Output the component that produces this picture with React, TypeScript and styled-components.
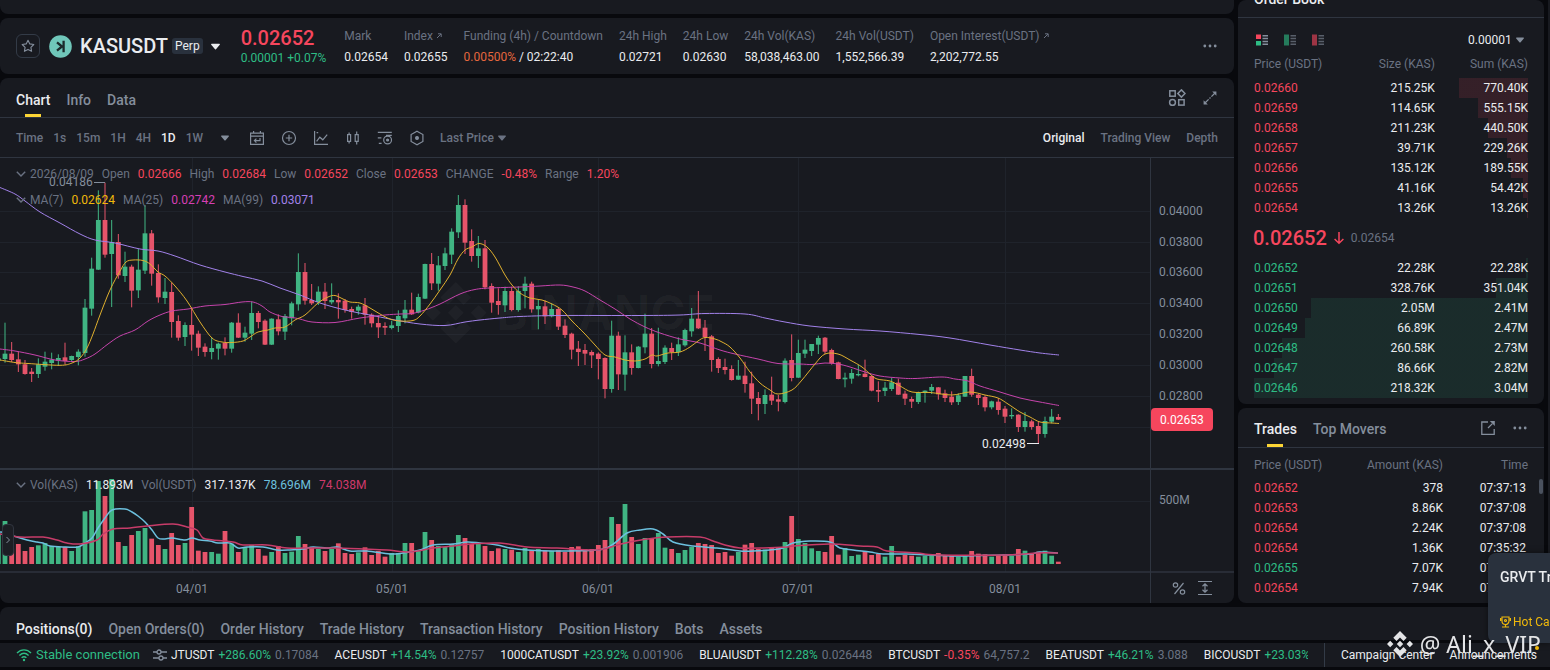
import React from "react";
import styled, { createGlobalStyle, css } from "styled-components";

const color = {
  page: "#08090d",
  panel: "#181a20",
  line: "#2f3540",
  grid: "#1f232b",
  text: "#eaecef",
  second: "#848e9c",
  third: "#6a7282",
  buy: "#2ebd85",
  sell: "#f6465d",
  candleUp: "#40b583",
  candleDown: "#e6546a",
  brand: "#fcd535",
};

const GlobalStyle = createGlobalStyle`
  * { box-sizing: border-box; }
  body {
    margin: 0;
    background: ${color.page};
    color: ${color.text};
    font-family: Roboto, "Liberation Sans", sans-serif;
    font-size: 12px;
    line-height: 16px;
  }
  button, select {
    font: inherit;
    color: inherit;
    background: none;
    border: 0;
    margin: 0;
    padding: 0;
    cursor: pointer;
  }
  a { color: inherit; text-decoration: none; }
  svg { display: block; flex: none; }
`;

/* ---------- layout ---------- */

const Page = styled.div`
  display: flex;
  flex-direction: column;
  gap: 4px;
`;

const Workspace = styled.div`
  display: grid;
  grid-template-columns: minmax(0, 1fr) 306px 2px;
  gap: 4px;
`;

const Column = styled.div`
  display: flex;
  flex-direction: column;
  gap: 4px;
  min-width: 0;
`;

const Panel = styled.section`
  background: ${color.panel};
  border-radius: 8px;
  overflow: hidden;
`;

const TopStrip = styled(Panel)`
  height: 14px;
  border-radius: 0 0 8px 8px;
`;

const EdgePanel = styled(Panel)`
  border-radius: 0;
`;

/* ---------- symbol header ---------- */

const SymbolBar = styled(Panel)`
  display: flex;
  align-items: center;
  height: 56px;
  padding: 0 16px;
`;

const StarButton = styled.button`
  display: grid;
  place-items: center;
  width: 24px;
  height: 24px;
  border: 1px solid #333b47;
  border-radius: 6px;
  margin-right: 9px;
  color: ${color.second};
`;

const SymbolName = styled.h1`
  margin: 0 4px 0 8px;
  font-size: 20px;
  line-height: 28px;
  font-weight: 500;
`;

const PerpBadge = styled.span`
  padding: 0 3px;
  border-radius: 3px;
  background: #29313d;
  font-size: 12px;
  margin-right: 8px;
`;

const PriceBlock = styled.div`
  margin: 0 18px 0 21px;
`;

const LastPrice = styled.div`
  color: ${color.sell};
  font-size: 20px;
  line-height: 24px;
  font-weight: 500;
`;

const Change = styled.div`
  color: ${color.buy};
  white-space: nowrap;
`;

const Stats = styled.dl`
  display: flex;
  gap: 16px;
  flex: 1;
  margin: 0;
  white-space: nowrap;
`;

const Stat = styled.div`
  dt {
    display: flex;
    gap: 3px;
    color: ${color.third};
    margin-bottom: 5px;
  }
  dd { margin: 0; }
`;

const Funding = styled.span`
  color: #e5673e;
`;

const IconButton = styled.button<{ $bright?: boolean }>`
  display: grid;
  place-items: center;
  color: ${(p) => (p.$bright ? color.text : color.second)};
`;

/* ---------- tabs ---------- */

const TabRow = styled.div<{ $divider?: boolean }>`
  display: flex;
  align-items: center;
  height: 40px;
  padding: 0 16px;
  ${(p) => p.$divider && css`border-bottom: 1px solid ${color.line};`}
`;

const Tabs = styled.nav<{ $top?: number }>`
  display: flex;
  gap: 16px;
  flex: 1;
  align-self: stretch;
  padding-top: ${(p) => p.$top ?? 4}px;
`;

const Tab = styled.button<{ $active?: boolean; $mark?: boolean }>`
  position: relative;
  font-size: 14px;
  font-weight: 500;
  white-space: nowrap;
  color: ${(p) => (p.$active ? color.text : color.second)};
  ${(p) =>
    p.$mark &&
    css`
      &::after {
        content: "";
        position: absolute;
        left: calc(50% - 8px);
        bottom: 0;
        width: 16px;
        height: 3px;
        background: ${color.brand};
      }
    `}
`;

const Actions = styled.div`
  display: flex;
  gap: 16px;
  align-items: center;
`;

/* ---------- chart toolbar ---------- */

const Toolbar = styled.div`
  display: flex;
  align-items: center;
  height: 40px;
  padding: 0 16px;
  color: ${color.third};
  border-bottom: 1px solid ${color.line};
`;

const Intervals = styled.div`
  display: flex;
  gap: 10px;
  margin-right: 18px;
`;

const TextButton = styled.button<{ $active?: boolean }>`
  font-weight: 500;
  white-space: nowrap;
  color: ${(p) => (p.$active ? color.text : color.third)};
`;

const ToolIcons = styled.div`
  display: flex;
  gap: 16px;
  margin: 0 15px 0 20px;
`;

const SelectWrap = styled.label<{ $bright?: boolean }>`
  display: flex;
  align-items: center;
  gap: 4px;
  color: ${(p) => (p.$bright ? color.text : color.third)};
  select {
    appearance: none;
    font-weight: ${(p) => (p.$bright ? 400 : 500)};
    outline: none;
  }
`;

const Views = styled.div`
  display: flex;
  gap: 16px;
  margin-left: auto;
`;

/* ---------- chart ---------- */

const ChartArea = styled.div`
  position: relative;
  height: 445px;
`;

const ChartSvg = styled.svg`
  width: 100%;
  height: 445px;
  font-size: 12px;
  fill: none;
`;

const Legend = styled.div<{ $top: number }>`
  position: absolute;
  left: 16px;
  top: ${(p) => p.$top}px;
  display: flex;
  align-items: center;
  gap: 8px;
  color: ${color.third};
  white-space: nowrap;
`;

const LegendLead = styled.span`
  display: flex;
  align-items: center;
  gap: 4px;
`;

const Tint = styled.span<{ $c: string }>`
  color: ${(p) => p.$c};
`;

const DrawerHandle = styled.button`
  position: absolute;
  left: 2px;
  top: 366px;
  width: 12px;
  height: 32px;
  display: grid;
  place-items: center;
  background: #1c1e24;
  border: 1px solid #30353f;
  border-radius: 4px;
  color: ${color.second};
`;

/* ---------- order book / trades ---------- */

const BookTitle = styled.header`
  display: flex;
  flex-direction: column;
  justify-content: flex-end;
  height: 18px;
  padding: 0 16px 8px;
  border-bottom: 1px solid ${color.line};
  overflow: hidden;
  font-size: 14px;
  line-height: 20px;
  font-weight: 500;
  h2 { margin: 0; font: inherit; }
`;

const BookTools = styled.div`
  display: flex;
  align-items: center;
  gap: 16px;
  height: 28px;
  margin: 8px 20px 0 18px;
  label { margin-left: auto; }
`;

const BookBody = styled(Panel)`
  padding-bottom: 6px;
`;

const TradesPanel = styled(Panel)`
  position: relative;
  height: 195px;
`;

const DataTable = styled.table<{ $second: number; $tall?: boolean }>`
  width: calc(100% - 32px);
  margin: 0 16px;
  border-collapse: collapse;
  table-layout: fixed;
  th, td {
    padding: 0;
    height: 20px;
    text-align: right;
    font-weight: 400;
  }
  th {
    height: ${(p) => (p.$tall ? 30 : 24)}px;
    padding: ${(p) => (p.$tall ? "4px 0 0" : "0 0 4px")};
    color: ${color.third};
  }
  th:first-child, td:first-child { text-align: left; }
  td:last-child { padding-right: ${(p) => (p.$tall ? 2 : 0)}px; }
  th:nth-child(1) { width: 38%; }
  th:nth-child(2) { width: ${(p) => p.$second}%; }
`;

const PriceCell = styled.td<{ $side: "buy" | "sell" }>`
  color: ${(p) => color[p.$side]};
`;

const MidPrice = styled.div`
  display: flex;
  align-items: center;
  gap: 6px;
  height: 40px;
  padding: 0 16px 0 15px;
  color: ${color.sell};
  strong {
    font-size: 20px;
    font-weight: 500;
  }
  span { color: ${color.third}; }
`;

const HiddenHead = styled.thead`
  visibility: collapse;
`;

const ScrollThumb = styled.i`
  position: absolute;
  right: 1px;
  top: 71px;
  width: 4px;
  height: 15px;
  border-radius: 2px;
  background: #4a515e;
`;

/* ---------- bottom ---------- */

const PositionsPanel = styled(Panel)`
  border-radius: 8px 8px 0 0;
  height: 33px;
`;

const Footer = styled.footer`
  display: flex;
  align-items: center;
  height: 24px;
  margin-top: -1px;
  padding-left: 16px;
  background: ${color.panel};
`;

const Connection = styled.span`
  display: flex;
  align-items: center;
  gap: 4px;
  margin-right: 13px;
  color: ${color.buy};
  font-size: 13px;
  white-space: nowrap;
`;

const Tape = styled.div`
  display: flex;
  flex: 1;
  gap: 16px;
  min-width: 0;
  overflow: hidden;
  margin: 0 16px 0 4px;
  white-space: nowrap;
`;

const Quote = styled.a`
  display: flex;
  gap: 4px;
  flex: none;
  span:last-child { color: ${color.third}; }
`;

const FooterLinks = styled.div`
  display: flex;
  align-items: center;
  gap: 16px;
  align-self: stretch;
  padding: 0 13px 0 16px;
  border-left: 1px solid #333b47;
  white-space: nowrap;
`;

const Toast = styled.aside`
  position: fixed;
  right: 0;
  top: 553px;
  width: 62px;
  height: 90px;
  padding: 15px 0 0 12px;
  overflow: hidden;
  white-space: nowrap;
  border-radius: 8px 0 0 8px;
  background: #29313d;
  box-shadow: 0 0 6px rgba(0, 0, 0, 0.5);
  h3 {
    margin: 0 0 28px;
    font-size: 14px;
    line-height: 18px;
    font-weight: 500;
  }
  p {
    display: flex;
    align-items: center;
    gap: 2px;
    margin: 0;
    color: #f0b90b;
  }
`;

const Signature = styled.div`
  position: fixed;
  right: 9px;
  top: 629px;
  display: flex;
  align-items: center;
  gap: 6px;
  color: #e3e4e6;
  font-family: "Noto Sans", sans-serif;
  font-size: 23px;
  line-height: 30px;
  white-space: nowrap;
`;

const Dot = styled.i`
  position: fixed;
  right: 11px;
  top: 646px;
  width: 4px;
  height: 4px;
  border-radius: 50%;
  background: #f0b90b;
`;

/* ---------- icons ---------- */

const Caret = ({ size = 8 }: { size?: number }) => (
  <svg width={size} height={size} viewBox="0 0 8 8" fill="currentColor">
    <path d="M.6 1.6h6.8c.5 0 .7.5.4.9L4.4 6.4a.6.6 0 0 1-.8 0L.2 2.5c-.3-.4-.1-.9.4-.9z" />
  </svg>
);

const Dots = () => (
  <svg width="16" height="16" viewBox="0 0 16 16" fill="currentColor">
    <circle cx="2.8" cy="8" r="1.4" />
    <circle cx="8" cy="8" r="1.4" />
    <circle cx="13.2" cy="8" r="1.4" />
  </svg>
);

const Star = () => (
  <svg width="14" height="14" viewBox="0 0 14 14" fill="none" stroke="currentColor" strokeWidth="1.1" strokeLinejoin="round">
    <path d="M7 1.2l1.8 3.7 4 .6-2.9 2.8.7 4L7 10.4l-3.6 1.9.7-4L1.2 5.5l4-.6z" />
  </svg>
);

const Coin = () => (
  <svg width="23" height="23" viewBox="0 0 23 23">
    <circle cx="11.5" cy="11.5" r="11.3" fill="#70c7ba" />
    <path d="M14.6 5.8v11.4M8 7.4l5 4.1-5 4.1" fill="none" stroke="#1c2b2c" strokeWidth="2.3" />
  </svg>
);

const OutArrow = () => (
  <svg width="6" height="16" viewBox="0 0 6 16" fill="none" stroke="currentColor">
    <path d="M1 10l4-4M2 5.8h3.2V9" />
  </svg>
);

const Chevron = () => (
  <svg width="10" height="10" viewBox="0 0 10 10" fill="none" stroke="currentColor" strokeWidth="1.4">
    <path d="M.8 2.8L5 7l4.2-4.2" />
  </svg>
);

const Layout = () => (
  <svg width="18" height="18" viewBox="0 0 18 18" fill="none" stroke="currentColor" strokeWidth="1.5">
    <rect x="1.8" y="1.8" width="5.4" height="5.4" />
    <path d="M13.4.9l3.6 3.6-3.6 3.6-3.6-3.6z" />
    <circle cx="4.5" cy="13.4" r="2.9" />
    <rect x="10.7" y="10.7" width="5.4" height="5.4" />
  </svg>
);

const Expand = () => (
  <svg width="16" height="16" viewBox="0 0 16 16" fill="currentColor">
    <path d="M10.2 1.600h4.200v4.200zM1.600 10.200v4.200h4.200z" />
    <path d="M12.800 3.200L9.400 6.600M8.500 7.500l-1 1M6.600 9.400l-3.400 3.400" stroke="currentColor" strokeWidth="1.3" />
  </svg>
);

const toolPaths: { name: string; art: React.ReactNode }[] = [
  {
    name: "Go to date",
    art: (
      <>
        <path d="M1.600 3.200h12.800v11.200H1.600zM1.600 6.200h12.800M4.600 1v2.200M11.400 1v2.200" />
        <path d="M11 8v2.600H5.600M7.400 8.600l-2 2 2 2" />
      </>
    ),
  },
  {
    name: "Compare",
    art: (
      <>
        <circle cx="8" cy="8" r="6.5" />
        <path d="M8 4.8v6.4M4.8 8h6.4" />
      </>
    ),
  },
  { name: "Indicators", art: <path d="M1.6 1v13.4H15M3.6 11.4l3.2-4.2 3 2.6 4.4-5.2M3.6 2.6h1.6" /> },
  {
    name: "Candle style",
    art: <path d="M2.600 4.600h3v6.800h-3zM4.100 2.400v2.200M4.100 11.400v2.200M10.200 4.600h3v6.800h-3zM11.700 1.600v3M11.700 11.400v3" />,
  },
  {
    name: "Display settings",
    art: (
      <>
        <path d="M.8 2.4h14M.8 7.8h3.6M1.8 13.4h2.8M14.8 5.4H9" />
        <circle cx="10.6" cy="10" r="3.9" />
        <circle cx="10.6" cy="10" r="1" fill="currentColor" />
      </>
    ),
  },
  {
    name: "Preferences",
    art: (
      <>
        <path d="M8 1.2l5.9 3.4v6.8L8 14.8l-5.9-3.4V4.6z" />
        <circle cx="8" cy="8" r="1.4" fill="currentColor" />
      </>
    ),
  },
];

const BookGlyph = ({ kind }: { kind: "both" | "bids" | "asks" }) => (
  <svg width="12" height="12" viewBox="0 0 12 12" opacity={kind === "both" ? 1 : 0.6}>
    <path d="M0 .5h5v4.500H0z" fill={kind === "bids" ? color.buy : color.sell} />
    <path d="M0 7h5v4.500H0z" fill={kind === "asks" ? color.sell : color.buy} />
    {kind !== "both" && <path d="M0 5h5v2H0z" fill={kind === "bids" ? color.buy : color.sell} />}
    <path d="M6.500 1H12v1.500H6.500zM6.500 3.800H12v1.500H6.500zM6.500 6.700H12v1.500H6.500zM6.500 9.500H12V11H6.500z" fill={color.second} />
  </svg>
);

const ArrowDown = () => (
  <svg width="12" height="14" viewBox="0 0 12 14" fill="none" stroke="currentColor" strokeWidth="1.5">
    <path d="M6 1v11M1.6 8L6 12.2 10.4 8" />
  </svg>
);

const PopOut = () => (
  <svg width="16" height="16" viewBox="0 0 16 16" fill="none" stroke="currentColor" strokeWidth="1.3">
    <path d="M8 2H1.8v12.4h12.4V9M8 8l4.4-4.4" />
    <path d="M9.8 1h5v5z" fill="currentColor" stroke="none" />
  </svg>
);

const Wifi = () => (
  <svg width="16" height="14" viewBox="0 0 16 14" fill="none" stroke="currentColor" strokeWidth="1.4">
    <path d="M1 5C5 .8 11 .8 15 5M3.4 7.4c2.8-2.6 6.4-2.6 9.2 0M5.6 9.8c1.4-1.3 3.4-1.3 4.8 0" />
    <circle cx="8" cy="12" r="1.2" fill="currentColor" stroke="none" />
  </svg>
);

const Sliders = () => (
  <svg width="14" height="14" viewBox="0 0 14 14" fill="none" stroke="currentColor" strokeWidth="1.3">
    <path d="M0 4h4M8 4h6M0 10h6M10 10h4" />
    <circle cx="6" cy="4" r="2" />
    <circle cx="8" cy="10" r="2" />
  </svg>
);

const Medal = () => (
  <svg width="11" height="12" viewBox="0 0 11 12" fill="none" stroke="currentColor" strokeWidth="1.2">
    <path d="M2 1h7v4a3.500 3.500 0 0 1-7 0zM.6 2v3M10.400 2v3M5.500 8.500v2M2 11h7" />
    <circle cx="5.500" cy="4.500" r="1" />
  </svg>
);

const Diamonds = ({ size }: { size: number }) => (
  <svg width={size} height={size} viewBox="0 0 28 28" fill="currentColor">
    <path d="M14 1l6.700 6.700-3.200 3.200L14 7.400l-3.500 3.500-3.200-3.200z" />
    <path d="M14 27l6.700-6.700-3.200-3.200-3.500 3.500-3.500-3.500-3.200 3.200z" />
    <path d="M4.200 10.800L7.400 14l-3.200 3.200L1 14zM23.800 10.800L27 14l-3.200 3.200-3.200-3.200zM14 10.800l3.200 3.200-3.200 3.200-3.200-3.200z" />
  </svg>
);

/* ---------- chart data ---------- */

/* Candles run left to right, one per day: side, high, body top, body bottom, low.
   Values are in thirds of a pixel below the `top` line of each span. */
const spans: { top: number; rows: string }[] = [
  {
    top: 170,
    rows: `G 560 565 572 575;G 458 551 567 578;R 516 551 570 576;R 545 568 583 606;R 570 583 612 614;R 594 605 612 636;G 565 583 612 624;
G 545 575 590 602;G 548 569 579 598;G 553 564 572 588;R 518 562 573 584;G 557 558 570 575;G 538 545 561 586;G 387 413 549 560;
G 263 296 416 437;G 61 150 299 300;R 38 150 254 263;G 150 216 252 411;R 192 216 316 326;G 245 290 318 336;R 284 290 362 412;
G 237 299 361 384;G 105 190 302 312;R 180 190 311 347;R 283 309 382 398;G 324 365 384 402;R 338 366 456 503;R 436 453 503 512;
G 457 465 501 528;R 412 465 494 542;R 482 491 533 558;R 520 530 546 560;G 503 534 546 568;G 518 521 536 569;R 502 519 536 556;
G 456 458 536 548;R 430 458 503 504;G 470 488 503 515;G 395 429 491 510`,
  },
  {
    top: 180,
    rows: `R 393 399 426 445;R 418 422 494 495;G 415 416 494 495;R 403 418 454 466;G 402 408 455 480;G 365 370 415 436;G 220 276 373 392;
R 249 276 362 374;R 312 360 370 375;G 319 335 366 375;R 309 335 363 387;G 310 360 367 373;R 340 360 367 416;R 357 362 390 398;
R 380 387 396 416;G 374 380 392 404;R 354 376 404 434;R 400 404 430 442;R 407 429 442 474;R 427 438 443 465;G 422 436 444 448;
G 391 408 438 456;G 360 389 415 430;R 338 389 403 405;G 341 351 398 400;G 251 252 356 357;R 219 252 310 330;G 228 256 311 332;
G 203 220 258 270;G 145 155 224 252;G 45 75 157 174;R 58 75 188 222;R 148 183 228 245;G 168 205 228 264;R 180 205 322 328;
R 310 318 368 398;R 325 363 375 404;G 320 333 376 396;R 320 333 390 394;G 319 333 390 395;G 290 311 333 385;R 305 311 388 398;
G 360 378 388 448;R 361 379 409 432;G 370 387 409 412;R 382 387 440 450;R 418 437 465 474;R 458 461 509 538;R 483 506 516 558;
R 492 510 521 555;R 511 516 526 564;R 517 521 537 598;R 532 534 627 655;G 422 467 627 638;R 455 467 583 630;G 466 517 584 632;
R 493 517 564 584;G 498 500 564 565;G 401 461 502 520;R 444 461 552 565;G 443 543 552 559;G 496 503 546 552;R 488 504 516 540;
G 472 493 516 528;G 446 450 496 500;G 384 416 454 470;R 333 416 445 447;R 420 443 471 513;R 465 469 540 575;R 532 537 564 579;
R 536 561 570 583;R 556 567 600 602`,
  },
  {
    top: 270,
    rows: `G 270 317 329 330;R 275 317 342 368;R 305 340 386 432;R 366 384 402 451;G 358 375 402 432;R 320 374 392 405;R 375 388 395 424;
G 265 272 396 400;R 193 270 324 334;G 209 249 323 324;G 209 239 251 264;G 222 222 243 258;G 197 204 224 252;R 201 203 245 252;
R 236 240 280 284;R 275 277 327 328;G 308 323 328 352;G 297 309 326 341;G 285 312 316 319;R 269 311 321 322;R 316 318 362 364;
R 334 360 365 396;G 336 353 363 378;G 324 337 357 363;R 326 338 374 375;R 362 371 386 405;R 380 387 395 414;G 365 367 396 402;
G 361 362 369 398;G 342 351 362 372;R 351 352 373 389;R 359 370 384 396;R 364 380 397 405;G 370 376 396 405;G 318 318 380 381;
R 296 318 374 380;R 371 374 384 405;R 376 381 412 424;G 392 394 412 418;R 384 395 420 434;R 408 416 440 459;G 415 435 439 447;
R 433 434 471 486;G 426 453 471 485;R 449 454 471 479;R 456 468 492 522;G 440 453 492 503;G 417 440 455 460;R 432 441 449 450`,
  },
];

const candles = spans.flatMap(({ top, rows }) =>
  rows.split(";").map((row) => {
    const [side, ...v] = row.trim().split(" ");
    const [high, open, close, low] = v.map((n) => top + Number(n) / 3);
    return { up: side === "G", high, open, close, low };
  }),
);

/* Volume bar tops, thirds of a pixel below y = 465. */
const volumes = `205 168 250 237 258 246 241 234 243 246 246 258 244 139 135 48 93 42 231 243 210 198 189 221 240 252 204 240 234 126
257 261 261 266 198 236 261 246 240 252 272 261 243 264 260 213 237 249 252 258 252 235 264 267 262 247 270 258 275 264 264 234 234
255 201 225 243 246 237 210 219 237 237 243 258 250 252 254 261 249 256 252 256 258 256 261 246 244 252 252 240 225 156 177 117 216
237 219 219 204 248 252 264 255 246 234 237 240 264 261 272 261 239 234 252 254 246 249 231 153 222 234 250 258 261 213 269 249 273
269 258 270 266 275 243 275 270 272 275 272 272 264 270 270 275 272 258 266 268 275 270 269 273 252 257 266 260 257 272 290`
  .split(/\s+/)
  .map(Number);

const centre = (i: number) => 5 + ((i - 1) * 20) / 3;

const smooth = (src: string) => {
  const p = src.trim().split(/\s+/).map((s) => s.split(",").map(Number));
  let d = `M${p[0]}`;
  for (let i = 0; i < p.length - 1; i++) {
    const a = p[Math.max(i - 1, 0)];
    const b = p[i];
    const c = p[i + 1];
    const e = p[Math.min(i + 2, p.length - 1)];
    d += `C${b[0] + (c[0] - a[0]) / 6},${b[1] + (c[1] - a[1]) / 6} ${c[0] - (e[0] - b[0]) / 6},${c[1] - (e[1] - b[1]) / 6} ${c}`;
  }
  return d;
};

const ma7 = smooth(`0,360 15,362.5 28,363.5 60,365.3 72,363 80,358 87,348 93,334 100,315 110,290 120,271 126,262 133,260 143,260.5
150,264 158,272 165,276 175,286 187,301 200,322 212,338 222,342 232,342.5 243,341 250,337 258,332 268,330 275,328 285,327 295,320
305,315 318,303 328,297 335,295.5 343,299 350,302 360,303 370,308 380,314 390,319 400,321 413,320.5 420,316 430,304 440,290 450,275
458,259 465,250 472,247 479,243.5 487,247 495,257 505,275 512,285 520,293 530,298 542,300 552,304 562,310 572,321 585,334 595,345
605,355 615,357 625,360 635,361 645,359 652,355 657,356 668,353 680,352 690,347 698,341 705,337.5 715,339 722,342 730,347 740,358
750,372 760,383 770,390 778,394 792,390 802,380 815,364 825,354 838,354 850,360 862,367 870,374 877,379 890,381 900,386 912,392
930,392.5 952,395 970,392 985,395 998,398 1008,404 1020,412 1030,417 1040,422 1052,423 1059,423.5`);

const ma25 = smooth(`0,349 15,351 35,355 55,360 75,361.5 85,359 95,354 108,344 120,336 135,330 148,321 160,315 172,311 188,309
205,306 225,304.5 242,302 253,302 262,306 270,312 282,316.5 292,317.5 300,319 312,322 335,322.5 360,318 385,315 400,314 412,313.5
425,310 440,304 460,294 475,289.5 490,288 520,287 540,286 560,285 573,287 585,291 600,300 615,309 630,319 645,327 660,333 680,339
700,343 720,350 735,354 758,359 778,363.5 800,364 812,364.5 825,363 838,364 850,367 865,372 880,376 900,378 915,378.5 942,377
955,379 968,381 980,386 1000,392 1020,398 1040,402 1059,405.5`);

const ma99 = smooth(`0,187.5 15,194 25,201 40,212 60,223 80,234 95,240 115,243 140,249 158,251 175,256 200,265 225,272 243,276.5
262,281 280,288 300,295 320,303 345,310 375,316 395,320 420,324 445,325.5 465,322 480,320 500,318 520,316.5 560,315.5 640,315.5
680,315 705,313.5 745,314 765,318 785,322 810,326 845,329 880,331 920,334.5 950,338 990,345 1020,350 1040,353 1059,355`);

const volFast = smooth(`0,532 5,533 17,537 27,540 37,542 43,543 50,546 63,547 78,547 85,543 92,538 98,528 105,518 112,510 125,509
132,512 138,516 145,522 152,530 158,538 165,539 172,538 185,540 192,538 200,540 210,541 218,543 230,543 238,548 247,547 263,547
277,550 290,550 303,549 313,547 327,548 337,547 350,551 367,551 390,554 403,553 420,550 433,545 453,544 467,542 480,543 497,545
510,548 527,550 553,551 597,550 612,545 627,533 640,530 653,529 663,534 673,542 693,546 717,548 740,551 753,551 770,550 783,548
793,543 810,541 830,542 840,548 853,550 870,552 883,554 907,554 953,556 1003,555 1030,554 1040,552 1058,553`);

const volSlow = smooth(`0,534 20,537 43,537 57,540 67,543 80,544 97,540 103,534 113,529 130,528 147,526 173,524 187,527 197,530
203,538 213,540 233,542 243,545 267,545 287,548 313,548 333,548 363,549 387,550 410,552 433,548 453,546 470,544 500,543 527,547
557,548 597,550 617,545 630,542 647,539 667,537 700,537 713,541 725,545 740,548 763,548 787,547 793,546 830,544 860,546 877,547
887,551 917,553 937,555 1007,555 1037,553 1058,553`);

const priceTicks: [string, number][] = [
  ["0.04000", 211],
  ["0.03800", 242],
  ["0.03600", 272],
  ["0.03400", 303],
  ["0.03200", 334],
  ["0.03000", 365],
  ["0.02800", 396],
];

const dateTicks: [string, number][] = [
  ["04/01", 192],
  ["05/01", 392],
  ["06/01", 598],
  ["07/01", 798],
  ["08/01", 1005],
];

const PriceChart = () => (
  <ChartSvg role="img" aria-label="KASUSDT daily candles and volume">
    <g transform="translate(0,-158)">
      <g stroke={color.grid} shapeRendering="crispEdges">
        {[...priceTicks.map(([, y]) => y), 427].map((y) => (
          <line key={y} x1="0" x2="100%" y1={y + 0.5} y2={y + 0.5} />
        ))}
        <line x1="0" x2="100%" y1="501.5" y2="501.5" />
        {dateTicks.map(([, x]) => (
          <line key={x} x1={x + 0.5} x2={x + 0.5} y1="158" y2="572" />
        ))}
      </g>
      <g fill="#fff" fillOpacity="0.03">
        <g transform="translate(425,282) scale(2.2)">
          <path d="M14 0l7 7-3.400 3.400L14 6.800l-3.600 3.600L7 7zM14 28l7-7-3.400-3.400-3.600 3.600-3.600-3.600L7 21zM3.600 10.400L7.200 14l-3.600 3.600L0 14zM24.400 10.400L28 14l-3.600 3.600-3.600-3.600zM14 10.400l3.600 3.600-3.600 3.600-3.600-3.600z" />
        </g>
        <text x="496" y="330" fontFamily="Inter, sans-serif" fontWeight="700" fontSize="48">BINANCE</text>
      </g>
      {candles.map((c, i) => {
        const x = centre(i);
        const fill = c.up ? color.candleUp : color.candleDown;
        const top = 465 + volumes[i] / 3;
        return (
          <g key={i} fill={fill}>
            <rect x={x - 0.5} y={c.high} width="1" height={c.low - c.high} />
            <rect x={x - 2.4} y={c.open} width="4.8" height={Math.max(c.close - c.open, 1)} />
            <rect x={x - 2.4} y={top} width="4.8" height={564 - top} />
          </g>
        );
      })}
      <path d={ma99} stroke="#a282ea" />
      <path d={ma25} stroke="#c644ac" />
      <path d={ma7} stroke="#e0b02e" />
      <path d={volFast} stroke="#6cc0de" strokeWidth="1.500" />
      <path d={volSlow} stroke="#c73c69" strokeWidth="1.500" />
      <g dominantBaseline="central">
        <text x="49" y="182" fill={color.second}>0.04186</text>
        <text x="982" y="444" fill={color.text}>0.02498</text>
        {dateTicks.map(([label, x]) => (
          <text key={label} x={x} y="589" textAnchor="middle" fill={color.second}>{label}</text>
        ))}
      </g>
      <path d="M94 182.500h11" stroke={color.second} />
      <path d="M1027 443.500h12" stroke={color.text} />
      <g stroke={color.line}>
        <line x1="0" x2="100%" y1="469" y2="469" strokeWidth="2" />
        <line x1="0" x2="100%" y1="572" y2="572" strokeWidth="2" strokeOpacity="0.700" />
      </g>
    </g>
    <svg x="100%" overflow="visible">
      <g transform="translate(-83,-158)">
        <rect x="0" y="158" width="83" height="310" fill={color.panel} />
        <rect x="0" y="471" width="83" height="100" fill={color.panel} />
        <line x1="-0.500" x2="-0.500" y1="158" y2="603" stroke={color.line} />
        <g dominantBaseline="central" fill={color.second}>
          {priceTicks.map(([label, y]) => (
            <text key={label} x="8" y={y}>{label}</text>
          ))}
          <text x="8" y="500">500M</text>
          <rect x="0" y="408" width="62" height="23" rx="4" fill={color.sell} />
          <text x="9" y="420" fill="#fff">0.02653</text>
        </g>
        <g stroke={color.second} strokeWidth="1.200">
          <circle cx="24.500" cy="585" r="2.200" />
          <circle cx="31.500" cy="592" r="2.200" />
          <path d="M32.500 583l-9 11M47 581.500h14M47 594.500h14M54 584v8M51.500 586.200l2.500-2.400 2.500 2.400M51.500 589.800l2.500 2.400 2.500-2.400" />
        </g>
      </g>
    </svg>
  </ChartSvg>
);

/* ---------- content ---------- */

const stats: { label: string; value: React.ReactNode; out?: boolean }[] = [
  { label: "Mark", value: "0.02654" },
  { label: "Index", value: "0.02655", out: true },
  { label: "Funding (4h) / Countdown", value: <><Funding>0.00500%</Funding> / 02:22:40</> },
  { label: "24h High", value: "0.02721" },
  { label: "24h Low", value: "0.02630" },
  { label: "24h Vol(KAS)", value: "58,038,463.00" },
  { label: "24h Vol(USDT)", value: "1,552,566.39" },
  { label: "Open Interest(USDT)", value: "2,202,772.55", out: true },
];

type Level = [string, string, string, number];

const asks: Level[] = [
  ["0.02660", "215.25K", "770.40K", 770],
  ["0.02659", "114.65K", "555.15K", 555],
  ["0.02658", "211.23K", "440.50K", 440],
  ["0.02657", "39.71K", "229.26K", 229],
  ["0.02656", "135.12K", "189.55K", 190],
  ["0.02655", "41.16K", "54.42K", 54],
  ["0.02654", "13.26K", "13.26K", 13],
];

const bids: Level[] = [
  ["0.02652", "22.28K", "22.28K", 22],
  ["0.02651", "328.76K", "351.04K", 351],
  ["0.02650", "2.05M", "2.41M", 2410],
  ["0.02649", "66.89K", "2.47M", 2470],
  ["0.02648", "260.58K", "2.73M", 2730],
  ["0.02647", "86.66K", "2.82M", 2820],
  ["0.02646", "218.32K", "3.04M", 3040],
];

const trades: [string, string, string, "buy" | "sell"][] = [
  ["0.02652", "378", "07:37:13", "sell"],
  ["0.02653", "8.86K", "07:37:08", "sell"],
  ["0.02654", "2.24K", "07:37:08", "sell"],
  ["0.02654", "1.36K", "07:35:32", "sell"],
  ["0.02655", "7.07K", "07:35:32", "buy"],
  ["0.02654", "7.94K", "07:35:31", "sell"],
];

const quotes: [string, string, string][] = [
  ["JTUSDT", "+286.60%", "0.17084"],
  ["ACEUSDT", "+14.54%", "0.12757"],
  ["1000CATUSDT", "+23.92%", "0.001906"],
  ["BLUAIUSDT", "+112.28%", "0.026448"],
  ["BTCUSDT", "-0.35%", "64,757.2"],
  ["BEATUSDT", "+46.21%", "3.088"],
  ["BICOUSDT", "+23.03%", "0.02190"],
];

const depthFill = (side: "buy" | "sell", amount: number) => {
  const c = side === "buy" ? "rgba(46,189,133,0.11)" : "rgba(246,70,93,0.13)";
  return { background: `linear-gradient(${c}, ${c}) right / ${(amount / 3040) * 100}% 100% no-repeat` };
};

const Levels = ({ side, rows }: { side: "buy" | "sell"; rows: Level[] }) => (
  <tbody>
    {rows.map(([price, size, sum, amount]) => (
      <tr key={price} style={depthFill(side, amount)}>
        <PriceCell $side={side}>{price}</PriceCell>
        <td>{size}</td>
        <td>{sum}</td>
      </tr>
    ))}
  </tbody>
);

const BookHead = () => (
  <tr>
    <th>Price (USDT)</th>
    <th>Size (KAS)</th>
    <th>Sum (KAS)</th>
  </tr>
);

const candleLegend: [string, string][] = [
  ["Open", "0.02666"],
  ["High", "0.02684"],
  ["Low", "0.02652"],
  ["Close", "0.02653"],
  ["CHANGE", "-0.48%"],
  ["Range", "1.20%"],
];

export default function App() {
  return (
    <>
      <GlobalStyle />
      <Page>
        <Workspace>
          <Column as="main">
            <TopStrip />
            <SymbolBar>
              <StarButton aria-label="Add to favourites"><Star /></StarButton>
              <Coin />
              <SymbolName>KASUSDT</SymbolName>
              <PerpBadge>Perp</PerpBadge>
              <IconButton $bright aria-label="Choose market"><Caret size={9} /></IconButton>
              <PriceBlock>
                <LastPrice>0.02652</LastPrice>
                <Change>0.00001 +0.07%</Change>
              </PriceBlock>
              <Stats>
                {stats.map((s) => (
                  <Stat key={s.label}>
                    <dt>{s.label}{s.out && <OutArrow />}</dt>
                    <dd>{s.value}</dd>
                  </Stat>
                ))}
              </Stats>
              <IconButton aria-label="More"><Dots /></IconButton>
            </SymbolBar>

            <Panel>
              <TabRow $divider>
                <Tabs>
                  <Tab $active $mark>Chart</Tab>
                  <Tab>Info</Tab>
                  <Tab>Data</Tab>
                </Tabs>
                <Actions>
                  <IconButton aria-label="Layout"><Layout /></IconButton>
                  <IconButton aria-label="Full screen"><Expand /></IconButton>
                </Actions>
              </TabRow>
              <Toolbar>
                <Intervals>
                  {["Time", "1s", "15m", "1H", "4H", "1D", "1W"].map((t) => (
                    <TextButton key={t} $active={t === "1D"}>{t}</TextButton>
                  ))}
                </Intervals>
                <IconButton aria-label="More intervals"><Caret /></IconButton>
                <ToolIcons>
                  {toolPaths.map(({ name, art }) => (
                    <IconButton key={name} aria-label={name}>
                      <svg width="16" height="16" viewBox="0 0 16 16" fill="none" stroke="currentColor" strokeWidth="1.200">{art}</svg>
                    </IconButton>
                  ))}
                </ToolIcons>
                <SelectWrap>
                  <select aria-label="Price type"><option>Last Price</option></select>
                  <Caret />
                </SelectWrap>
                <Views>
                  <TextButton $active>Original</TextButton>
                  <TextButton>Trading View</TextButton>
                  <TextButton>Depth</TextButton>
                </Views>
              </Toolbar>
              <ChartArea>
                <PriceChart />
                <Legend $top={8}>
                  <LegendLead><Chevron />2026/08/09</LegendLead>
                  {candleLegend.map(([k, v]) => (
                    <React.Fragment key={k}><span>{k}</span><Tint $c={color.sell}>{v}</Tint></React.Fragment>
                  ))}
                </Legend>
                <Legend $top={34}>
                  <LegendLead><Chevron />MA(7)</LegendLead>
                  <Tint $c="#f0b90b">0.02624</Tint>
                  <span>MA(25)</span><Tint $c="#d63fb4">0.02742</Tint>
                  <span>MA(99)</span><Tint $c="#a282ea">0.03071</Tint>
                </Legend>
                <Legend $top={319}>
                  <LegendLead><Chevron />Vol(KAS)</LegendLead>
                  <Tint $c={color.text}>11.893M</Tint>
                  <span>Vol(USDT)</span>
                  <Tint $c={color.text}>317.137K</Tint>
                  <Tint $c="#6cc0de">78.696M</Tint>
                  <Tint $c="#d0396b">74.038M</Tint>
                </Legend>
                <DrawerHandle aria-label="Open drawing tools">
                  <svg width="6" height="8" viewBox="0 0 6 8" fill="none" stroke="currentColor"><path d="M1.500 1l3 3-3 3" /></svg>
                </DrawerHandle>
              </ChartArea>
            </Panel>
          </Column>

          <Column>
            <BookBody>
              <BookTitle><h2>Order Book</h2></BookTitle>
              <BookTools>
                {(["both", "bids", "asks"] as const).map((k) => (
                  <IconButton key={k} aria-label={`Show ${k}`}><BookGlyph kind={k} /></IconButton>
                ))}
                <SelectWrap $bright>
                  <select aria-label="Tick size"><option>0.00001</option></select>
                  <IconButton as="span"><Caret /></IconButton>
                </SelectWrap>
              </BookTools>
              <DataTable $second={28}>
                <thead><BookHead /></thead>
                <Levels side="sell" rows={asks} />
              </DataTable>
              <MidPrice>
                <strong>0.02652</strong>
                <ArrowDown />
                <span>0.02654</span>
              </MidPrice>
              <DataTable $second={28}>
                <HiddenHead><BookHead /></HiddenHead>
                <Levels side="buy" rows={bids} />
              </DataTable>
            </BookBody>

            <TradesPanel>
              <TabRow $divider>
                <Tabs $top={2}>
                  <Tab $active $mark>Trades</Tab>
                  <Tab>Top Movers</Tab>
                </Tabs>
                <Actions>
                  <IconButton aria-label="Open in new window"><PopOut /></IconButton>
                  <IconButton aria-label="More"><Dots /></IconButton>
                </Actions>
              </TabRow>
              <DataTable $second={31} $tall>
                <thead>
                  <tr>
                    <th>Price (USDT)</th>
                    <th>Amount (KAS)</th>
                    <th>Time</th>
                  </tr>
                </thead>
                <tbody>
                  {trades.map(([price, amount, time, side], i) => (
                    <tr key={i}>
                      <PriceCell $side={side}>{price}</PriceCell>
                      <td>{amount}</td>
                      <td>{time}</td>
                    </tr>
                  ))}
                </tbody>
              </DataTable>
              <ScrollThumb />
            </TradesPanel>
          </Column>

          <EdgePanel />
        </Workspace>

        <PositionsPanel>
          <TabRow>
            <Tabs>
              {["Positions(0)", "Open Orders(0)", "Order History", "Trade History", "Transaction History", "Position History", "Bots", "Assets"].map((t, i) => (
                <Tab key={t} $active={i === 0}>{t}</Tab>
              ))}
            </Tabs>
          </TabRow>
        </PositionsPanel>

        <Footer>
          <Connection><Wifi />Stable connection</Connection>
          <IconButton aria-label="Ticker settings"><Sliders /></IconButton>
          <Tape>
            {quotes.map(([name, change, price]) => (
              <Quote key={name} href="#">
                <span>{name}</span>
                <Tint $c={change[0] === "-" ? color.sell : color.buy}>{change}</Tint>
                <span>{price}</span>
              </Quote>
            ))}
          </Tape>
          <FooterLinks>
            <a href="#">Campaign Center</a>
            <a href="#">Announcements</a>
          </FooterLinks>
        </Footer>
      </Page>

      <Toast>
        <h3>GRVT Trading</h3>
        <p><Medal />Hot Campaign</p>
      </Toast>
      <Signature><Diamonds size={28} />@ Ali_x_VIP</Signature>
      <Dot />
    </>
  );
}
